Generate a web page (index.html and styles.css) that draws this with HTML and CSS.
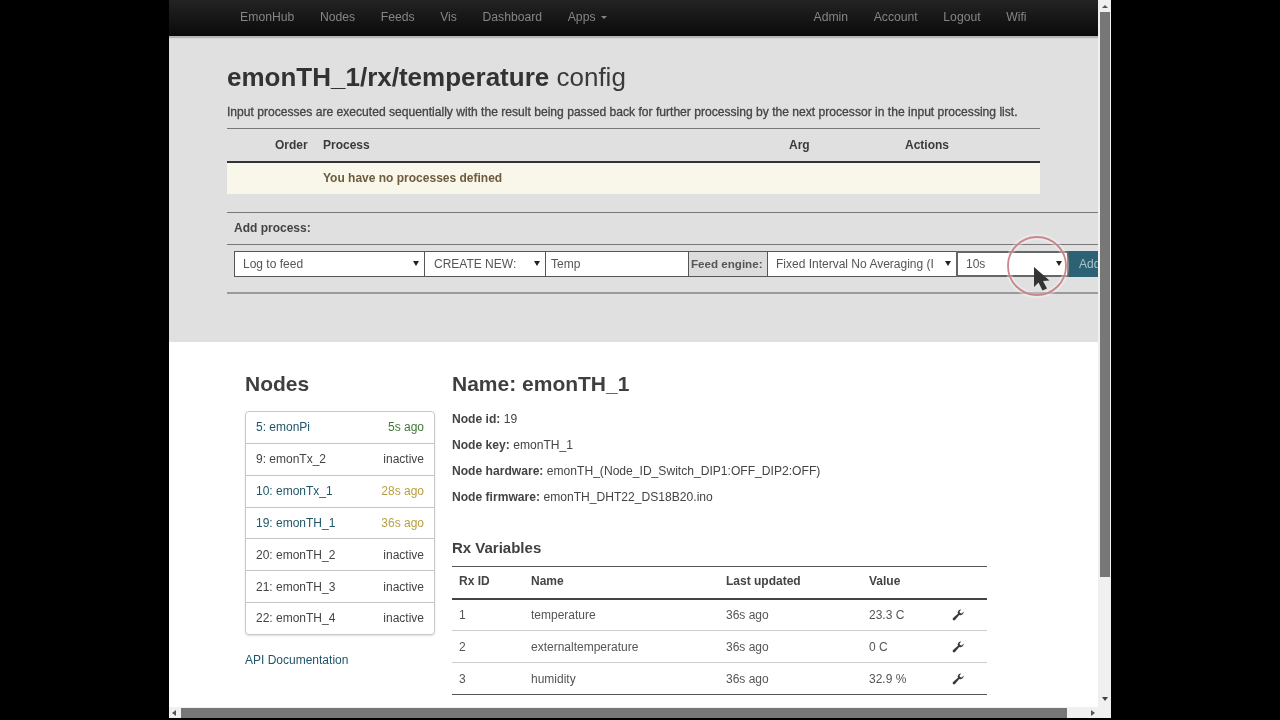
FILE: index.html
```html
<!DOCTYPE html>
<html lang="en">
<head>
<meta charset="utf-8">
<title>emonTH_1/rx/temperature config</title>
<link rel="stylesheet" href="styles.css">
</head>
<body>
<div class="frame">
  <div class="upper">
    <div class="viewport">
      <nav class="nav">
        <a>EmonHub</a><a>Nodes</a><a>Feeds</a><a>Vis</a><a>Dashboard</a><a>Apps <i class="nav-caret"></i></a>
        <span class="nav-space"></span>
        <a>Admin</a><a>Account</a><a>Logout</a><a>Wifi</a>
      </nav>
      <section class="panel">
        <h2 class="panel-title"><b>emonTH_1/rx/temperature</b> config</h2>
        <p class="panel-intro">Input processes are executed sequentially with the result being passed back for further processing by the next processor in the input processing list.</p>
        <table class="proc-table">
          <thead>
            <tr><th class="pc-a"></th><th class="pc-b">Order</th><th class="pc-c">Process</th><th class="pc-d">Arg</th><th>Actions</th></tr>
          </thead>
          <tbody>
            <tr><td></td><td></td><td colspan="3" class="proc-empty">You have no processes defined</td></tr>
          </tbody>
        </table>
        <div class="add-head">Add process:</div>
        <div class="add-row">
          <div class="ctl ctl-1">Log to feed<i class="sel-caret"></i></div>
          <div class="ctl ctl-2">CREATE NEW:<i class="sel-caret"></i></div>
          <div class="ctl ctl-3">Temp</div>
          <div class="ctl ctl-4">Feed engine:</div>
          <div class="ctl ctl-5">Fixed Interval No Averaging (I<i class="sel-caret"></i></div>
          <div class="ctl ctl-6">10s<i class="sel-caret"></i></div>
          <div class="ctl-btn">Add</div>
        </div>
        <div class="add-foot"></div>
      </section>
      <section class="lower">
        <aside class="side">
          <h3 class="side-title">Nodes</h3>
          <ul class="node-list">
            <li class="node live"><span>5: emonPi</span><span class="t-green">5s ago</span></li>
            <li class="node"><span>9: emonTx_2</span><span>inactive</span></li>
            <li class="node live"><span>10: emonTx_1</span><span class="t-yellow">28s ago</span></li>
            <li class="node live"><span>19: emonTH_1</span><span class="t-yellow">36s ago</span></li>
            <li class="node"><span>20: emonTH_2</span><span>inactive</span></li>
            <li class="node"><span>21: emonTH_3</span><span>inactive</span></li>
            <li class="node"><span>22: emonTH_4</span><span>inactive</span></li>
          </ul>
          <a class="api-link">API Documentation</a>
        </aside>
        <div class="detail">
          <h3 class="detail-title">Name: emonTH_1</h3>
          <p class="kv"><b>Node id:</b> 19</p>
          <p class="kv"><b>Node key:</b> emonTH_1</p>
          <p class="kv"><b>Node hardware:</b> emonTH_(Node_ID_Switch_DIP1:OFF_DIP2:OFF)</p>
          <p class="kv"><b>Node firmware:</b> emonTH_DHT22_DS18B20.ino</p>
          <h4 class="rx-title">Rx Variables</h4>
          <table class="rx-table">
            <thead>
              <tr><th class="rc-a">Rx ID</th><th class="rc-b">Name</th><th class="rc-c">Last updated</th><th class="rc-d">Value</th><th></th></tr>
            </thead>
            <tbody>
              <tr><td>1</td><td>temperature</td><td class="t-yellow">36s ago</td><td>23.3 C</td><td><svg class="wrench" viewBox="0 0 12 12"><path d="M11.6 2.6a3.3 3.3 0 0 1-4.3 3.5L3 10.9a1.3 1.3 0 0 1-1.9-1.9l4.8-4.3A3.3 3.3 0 0 1 9.4.4L7.6 2.2l.4 1.8 1.8.4z"/></svg></td></tr>
              <tr><td>2</td><td>externaltemperature</td><td class="t-yellow">36s ago</td><td>0 C</td><td><svg class="wrench" viewBox="0 0 12 12"><path d="M11.6 2.6a3.3 3.3 0 0 1-4.3 3.5L3 10.9a1.3 1.3 0 0 1-1.9-1.9l4.8-4.3A3.3 3.3 0 0 1 9.4.4L7.6 2.2l.4 1.8 1.8.4z"/></svg></td></tr>
              <tr><td>3</td><td>humidity</td><td class="t-yellow">36s ago</td><td>32.9 %</td><td><svg class="wrench" viewBox="0 0 12 12"><path d="M11.6 2.6a3.3 3.3 0 0 1-4.3 3.5L3 10.9a1.3 1.3 0 0 1-1.9-1.9l4.8-4.3A3.3 3.3 0 0 1 9.4.4L7.6 2.2l.4 1.8 1.8.4z"/></svg></td></tr>
            </tbody>
          </table>
        </div>
      </section>
      <svg class="pointer" viewBox="0 0 70 70" width="70" height="70">
        <circle class="ring-halo" cx="35" cy="35" r="29"/>
        <circle class="ring" cx="35" cy="35" r="29"/>
        <path class="arrow" d="M32 36l0 20 4.500-4.500 4 8 4.500-2-4-7.500 6.500-.5z"/>
      </svg>
    </div>
    <div class="vbar">
      <i class="arr arr-up"></i>
      <div class="vthumb"></div>
      <span class="vspace"></span>
      <i class="arr arr-down"></i>
    </div>
  </div>
  <div class="hbar">
    <i class="arr arr-left"></i>
    <div class="hthumb"></div>
    <span class="vspace"></span>
    <i class="arr arr-right"></i>
    <span class="hcorner"></span>
  </div>
</div>
</body>
</html>
```
FILE: styles.css
```css
* { box-sizing: border-box; }
html, body { margin: 0; height: 720px; overflow: hidden; background: #000; }
body { padding-left: 169px; font-family: "Liberation Sans", Arial, sans-serif; color: #444; font-size: 12px; }
.frame { width: 942px; height: 718px; display: flex; flex-direction: column; background: #fff; filter: blur(0.35px); }
.upper { display: flex; height: 707px; }
.viewport { position: relative; width: 929px; height: 707px; overflow: hidden; background: #fff; }

.nav { height: 36px; display: flex; align-items: center; padding: 0 58.700px 2px 58.300px; background: linear-gradient(#232323, #0a0a0a); box-shadow: 0 2px 1px #b5b5b5; position: relative; }
.nav a { padding: 0 12.800px; color: #858585; font-size: 12.200px; }
.nav-space { flex: 1; }
.nav-caret { display: inline-block; margin: 0 0 2px 2px; border: 3px solid transparent; border-top-color: #858585; border-bottom: 0; }

.panel { height: 306px; background: #e0e0e0; padding: 27px 0 0 58px; overflow: hidden; }
.panel-title { margin: 0; font-size: 26px; line-height: 28px; font-weight: 400; color: #3a3a3a; }
.panel-title b { color: #333; }
.panel-intro { margin: 14px 0 0; font-size: 12.100px; line-height: 14px; color: #444; font-weight: 400; white-space: nowrap; -webkit-text-stroke: 0.3px #444; }

.proc-table { width: 813px; margin-top: 9px; border-collapse: collapse; table-layout: fixed; border-top: 1px solid #777; font-size: 12px; }
.proc-table th { height: 33px; padding: 0; text-align: left; color: #3a3a3a; border-bottom: 2px solid #333; }
.pc-a { width: 48px; }
.pc-b { width: 48px; }
.pc-c { width: 466px; }
.pc-d { width: 116px; }
.proc-table td { height: 32px; padding: 0; background: #f9f6ea; }
.proc-empty { font-weight: 700; color: #6a5c3c; }

.add-head { margin-top: 18px; height: 33px; border-top: 1px solid #777; border-bottom: 1px solid #777; display: flex; align-items: center; padding-left: 7px; font-weight: 700; color: #444; }
.add-row { display: flex; margin: 6px 0 0 7px; width: 1000px; height: 26px; }
.ctl { height: 26px; display: flex; align-items: center; border: 1px solid #555; border-left-width: 1px; background: #fff; color: #555; flex: none; margin-right: -1px; }
.ctl-1 { width: 191px; padding-left: 8px; }
.ctl-2 { width: 122px; padding-left: 9px; }
.ctl-3 { width: 144px; padding-left: 5px; }
.ctl-4 { width: 80px; padding-left: 2px; background: #dcdcdc; font-size: 11.600px; font-weight: 700; color: #555; }
.ctl-5 { width: 190px; padding-left: 8px; }
.ctl-6 { width: 113px; padding-left: 8px; border-width: 2px; border-color: #666; }
.sel-caret { margin-left: auto; margin-right: 5px; border: 3px solid transparent; border-top: 5px solid #222; border-bottom: 0; }
.ctl-btn { margin-left: 1px; height: 26px; width: 60px; background: #2c6274; color: #a9c4cd; padding-left: 10px; line-height: 26px; flex: none; }
.add-foot { margin-top: 15px; height: 2px; background: #9a9a9a; }

.lower { display: flex; padding: 30px 0 0 76px; }
.side { width: 190px; margin-right: 17px; flex: none; }
.side-title, .detail-title { margin: 0; font-size: 21px; line-height: 24px; font-weight: 700; color: #3f3f3f; }
.node-list { list-style: none; margin: 15px 0 0; padding: 0; border: 1px solid #c9c9c9; border-radius: 4px; box-shadow: 0 1px 2px #ddd; }
.node { height: 31.800px; display: flex; justify-content: space-between; align-items: center; padding: 0 10px; border-top: 1px solid #c4c4c4; color: #444; }
.node:first-child { height: 31px; padding-bottom: 2px; border-top: 0; }
.node.live > span:first-child { color: #1f5568; }
.t-green { color: #3f7a34; }
.t-yellow { color: #b9a044; }
.api-link { display: block; margin-top: 18px; color: #1f5568; line-height: 14px; }

.detail { width: 535px; flex: none; }
.kv { margin: 0; height: 26px; line-height: 26px; font-size: 12.100px; color: #444; }
.detail-title + .kv { margin-top: 10px; }
.rx-title { margin: 29px 0 0; font-size: 15px; line-height: 18px; font-weight: 700; color: #3f3f3f; }
.rx-table { width: 535px; margin-top: 9px; border-collapse: collapse; table-layout: fixed; border-top: 1px solid #555; border-bottom: 1px solid #555; }
.rx-table th { height: 32px; padding: 0 0 2px 7px; text-align: left; color: #444; border-bottom: 2px solid #444; }
.rx-table td { height: 32px; padding: 0 0 0 7px; border-top: 1px solid #ccc; color: #555; }
.rc-a { width: 72px; }
.rc-b { width: 195px; }
.rc-c { width: 143px; }
.rc-d { width: 83px; }
.wrench { display: block; width: 12px; height: 12px; fill: #3a3a3a; }

.pointer { position: absolute; left: 833px; top: 231px; overflow: visible; }
.ring-halo { fill: none; stroke: #fff; stroke-width: 6; opacity: 0.3; }
.ring { fill: none; stroke: #c9868c; stroke-width: 1.800; }
.arrow { fill: #333; }

.vbar { width: 13px; height: 707px; background: #f0f0f0; display: flex; flex-direction: column; align-items: center; }
.vthumb { width: 10px; height: 565px; margin-top: 4px; background: #777; }
.vspace { flex: 1; }
.arr { display: block; flex: none; border: 3px solid transparent; }
.arr-up { margin-top: 5px; border-bottom: 3px solid #555; border-top: 0; }
.arr-down { margin-bottom: 6px; border-top: 4px solid #444; border-bottom: 0; }
.hbar { height: 11px; background: #f0f0f0; display: flex; align-items: center; padding-left: 3px; }
.hthumb { flex: none; width: 886px; height: 10px; margin-left: 5px; background: #777; }
.arr-left { border-right: 4px solid #555; border-left: 0; }
.arr-right { border-left: 4px solid #555; border-right: 0; margin-right: 3px; }
.hcorner { width: 13px; flex: none; }
```
